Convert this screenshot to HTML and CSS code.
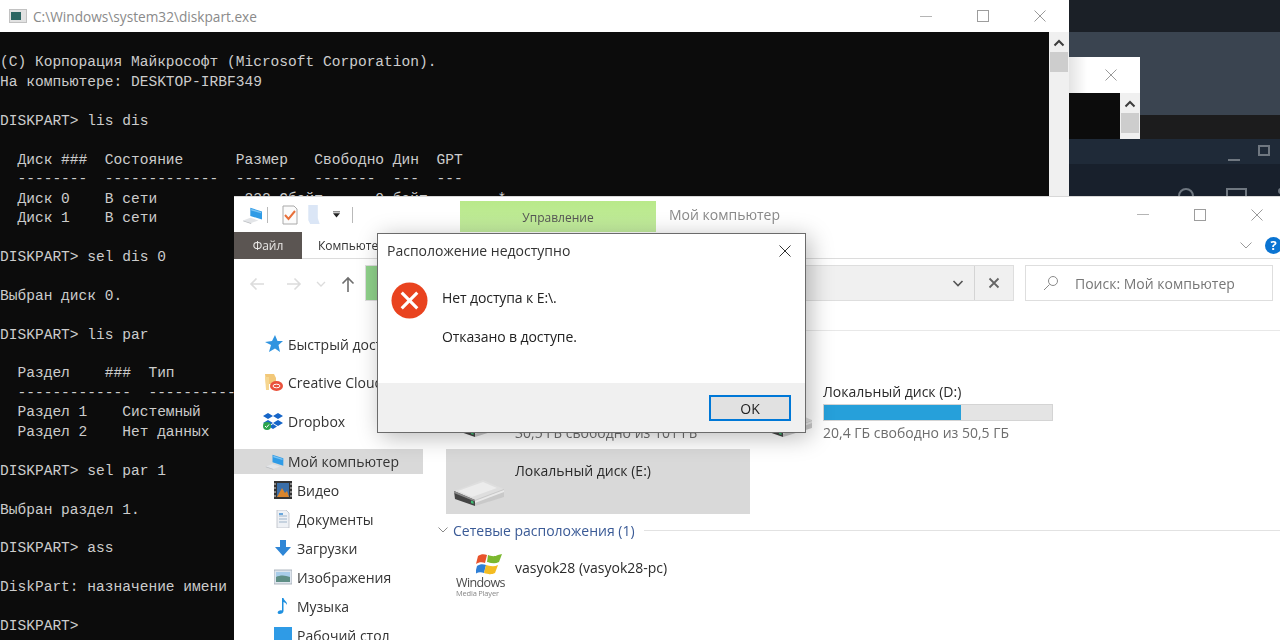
FILE: index.html
```html
<!DOCTYPE html>
<html lang="ru">
<head>
<meta charset="utf-8">
<title>diskpart</title>
<link rel="stylesheet" href="styles.css">
</head>
<body>
<svg class="defs" aria-hidden="true">
  <symbol id="pc" viewBox="0 0 24 20">
    <path d="M9 2 22 6v9L9 11z" fill="#2f9be6"/>
    <path d="M10 3.200 21 6.600v1.500L10 5z" fill="#7cc4f3"/>
    <path d="M1 16l8-3 9 3-8 3z" fill="#e3e5e8"/>
    <path d="M1 16l9 3v1l-9-3z" fill="#b9bcc0"/>
  </symbol>
  <symbol id="drive" viewBox="0 0 50 26">
    <path d="M0 11 29 0l21 9-29 11z" fill="#dedede"/>
    <path d="M4 11 29 2l14 6-25 9z" fill="#ececec"/>
    <path d="M21 20 50 9v8L21 26z" fill="#c9c9c9"/>
    <path d="M21 21 50 10v2L21 23z" fill="#e9e9e9"/>
    <path d="M0 11l21 9v6L1 19z" fill="#444"/>
    <path d="M0 11l21 9v1.500L0 13z" fill="#8c8c8c"/>
    <path d="M17 20.500l2.500 1v2.500l-2.500-1z" fill="#3fbf74"/>
  </symbol>
  <symbol id="x" viewBox="0 0 12 12">
    <path d="M.5.5l11 11M11.500.5l-11 11" fill="none" stroke="currentColor" stroke-width="1"/>
  </symbol>
  <symbol id="up" viewBox="0 0 12 8">
    <path d="M1.500 6.500 6 2l4.500 4.500" fill="none" stroke="currentColor" stroke-width="2"/>
  </symbol>
</svg>

<div class="desktop">
  <div class="backapp">
    <div class="ba-top"></div>
    <div class="ba-slate"></div>
    <div class="ba-black"></div>
    <div class="ba-bar">
      <span class="ba-min"></span>
      <span class="ba-max"></span>
    </div>
    <div class="ba-tools">
      <span class="ba-circle"></span>
      <span class="ba-rect"></span>
      <span class="ba-dot"></span>
    </div>
  </div>

  <div class="minicmd">
    <div class="mini-title"><svg class="x-icon"><use href="#x"/></svg></div>
    <div class="mini-body">
      <div class="scrollbar">
        <svg class="sb-arrow"><use href="#up"/></svg>
        <span class="sb-thumb"></span>
      </div>
    </div>
  </div>

  <section class="cmd">
    <header class="cmd-title">
      <span class="cmd-icon"><span class="cmd-icon-in"></span></span>
      <span class="cmd-path">C:\Windows\system32\diskpart.exe</span>
      <span class="winbtns cmd-btns">
        <span class="wb"><span class="min"></span></span>
        <span class="wb"><span class="max"></span></span>
        <span class="wb"><svg class="x-icon"><use href="#x"/></svg></span>
      </span>
    </header>
    <div class="cmd-body">
<pre class="console">

(C) Корпорация Майкрософт (Microsoft Corporation).
На компьютере: DESKTOP-IRBF349

DISKPART&gt; lis dis

  Диск ###  Состояние      Размер   Свободно Дин  GPT
  --------  -------------  -------  -------  ---  ---
  Диск 0    В сети          232 Gбайт      0 байт        *
  Диск 1    В сети          931 Gбайт      0 байт

DISKPART&gt; sel dis 0

Выбран диск 0.

DISKPART&gt; lis par

  Раздел    ###  Тип              Размер   Смещение
  -------------  ----------------  -------  -------
  Раздел 1    Системный          100 Mб  1024 Kб
  Раздел 2    Нет данных          16 Mб   101 Mб

DISKPART&gt; sel par 1

Выбран раздел 1.

DISKPART&gt; ass

DiskPart: назначение имени диска выполнено успешно.

DISKPART&gt;
</pre>
      <div class="scrollbar">
        <svg class="sb-arrow"><use href="#up"/></svg>
        <span class="sb-thumb"></span>
      </div>
    </div>
  </section>

  <section class="explorer">
    <header class="ex-title">
      <svg class="qa-pc"><use href="#pc"/></svg>
      <span class="qa-sep"></span>
      <svg class="qa-note" viewBox="0 0 16 20">
        <path d="M1 1h11l3 3v15H1z" fill="#fbfbfb" stroke="#a9a9a9"/>
        <path d="M3 10l3.500 4L13 6" fill="none" stroke="#e8703a" stroke-width="2"/>
      </svg>
      <svg class="qa-folder" viewBox="0 0 12 20"><path d="M0 0h10v14l2 6H2l-2-4z" fill="#dbe6f6"/></svg>
      <svg class="qa-drop" viewBox="0 0 8 7"><path d="M0 0h8v1H0zM0 2h8L4 7z" fill="#222"/></svg>
      <span class="qa-sep qa-sep2"></span>
      <span class="manage"><span class="manage-label">Управление</span></span>
      <span class="ex-name">Мой компьютер</span>
      <span class="winbtns ex-btns">
        <span class="wb"><span class="min"></span></span>
        <span class="wb"><span class="max"></span></span>
        <span class="wb"><svg class="x-icon"><use href="#x"/></svg></span>
      </span>
    </header>

    <nav class="ribbon">
      <span class="tab-file">Файл</span>
      <span class="tab">Компьютер</span>
      <svg class="rb-chev" viewBox="0 0 12 7"><path d="M.5.5 6 6 11.500.5" fill="none" stroke="#9a9a9a"/></svg>
      <span class="help">?</span>
    </nav>

    <div class="navbar">
      <svg class="nav-a back" viewBox="0 0 16 14"><path d="M15 7H2M7.500 1.500 2 7l5.500 5.500" fill="none" stroke="#dcdcdc" stroke-width="1.600"/></svg>
      <svg class="nav-a fwd" viewBox="0 0 16 14"><path d="M1 7h13M8.500 1.500 14 7l-5.500 5.500" fill="none" stroke="#dcdcdc" stroke-width="1.600"/></svg>
      <svg class="nav-c" viewBox="0 0 10 6"><path d="M1 1l4 4 4-4" fill="none" stroke="#dcdcdc" stroke-width="1.300"/></svg>
      <svg class="nav-u" viewBox="0 0 14 16"><path d="M7 16V2M1.500 7.500 7 2l5.500 5.500" fill="none" stroke="#6e6e6e" stroke-width="1.600"/></svg>
      <div class="address">
        <span class="addr-icon"></span>
        <span class="addr-fill"></span>
        <svg class="addr-chev" viewBox="0 0 12 7"><path d="M1.500 1 6 5.500 10.500 1" fill="none" stroke="#555" stroke-width="1.600"/></svg>
        <span class="addr-x"><svg class="addr-x-i" viewBox="0 0 12 12"><path d="M1.500 1.500l9 9M10.500 1.500l-9 9" stroke="#666" stroke-width="1.800"/></svg></span>
      </div>
      <div class="search">
        <svg class="search-i" viewBox="0 0 16 16"><circle cx="10" cy="6" r="4.500" fill="none" stroke="#8a8a8a"/><path d="M6.500 9.500 1 15" stroke="#8a8a8a"/></svg>
        <span class="search-t">Поиск: Мой компьютер</span>
      </div>
    </div>

    <div class="ex-body">
      <aside class="sidebar">
        <div class="side-top">
          <svg class="si" viewBox="0 0 18 18"><path d="M10 0l2.500 6H18l-4.500 4 1.500 7-5-3.500L4 17l2-7-6-3 7-1z" fill="#2f94e0"/></svg>
          <span>Быстрый доступ</span>
        </div>
        <div class="side-top">
          <svg class="si" viewBox="0 0 18 18"><path d="M0 0h9l2 4v6H1z" fill="#f2c879"/><path d="M0 3h4v13H1z" fill="#f6d690"/><ellipse cx="11.500" cy="12" rx="6.500" ry="5" fill="#e9513b"/><ellipse cx="11.500" cy="12" rx="3.500" ry="1.800" fill="none" stroke="#fff"/></svg>
          <span>Creative Cloud Files</span>
        </div>
        <div class="side-top">
          <svg class="si si-wide" viewBox="0 0 20 18"><path d="M5 1l5 3-5 3-5-3zM15 1l5 3-5 3-5-3zM5 8l5 3-5 3-5-3zM15 8l5 3-5 3-5-3zM10 12l4 2.500-4 2.500-4-2.500z" fill="#1565c8"/><circle cx="4" cy="14" r="4" fill="#2da44e"/><path d="M2 14l1.500 1.500L6 12.500" fill="none" stroke="#fff"/></svg>
          <span>Dropbox</span>
        </div>
        <div class="side-sel">
          <svg class="si"><use href="#pc"/></svg>
          <span>Мой компьютер</span>
        </div>
        <div class="side-child">
          <svg class="si" viewBox="0 0 18 18"><rect width="18" height="18" fill="#333"/><rect x="3" y="2" width="12" height="14" fill="#3a6ea8"/><path d="M3 16l5-9 3 5 2-2 2 6z" fill="#d9852c"/><path d="M1 2v14M17 2v14" stroke="#ddd" stroke-dasharray="2 2"/></svg>
          <span>Видео</span>
        </div>
        <div class="side-child">
          <svg class="si" viewBox="0 0 18 18"><path d="M3 0h9l3 3v15H3z" fill="#eef1f5" stroke="#b9bec5" stroke-width=".8"/><path d="M5 6h8M5 9h8M5 12h8" stroke="#9db3c9"/><rect x="5" y="3" width="4" height="2" fill="#6aa7dc"/></svg>
          <span>Документы</span>
        </div>
        <div class="side-child">
          <svg class="si" viewBox="0 0 18 18"><path d="M6 1h6v7h5l-8 9-8-9h5z" fill="#2f86d6"/></svg>
          <span>Загрузки</span>
        </div>
        <div class="side-child">
          <svg class="si" viewBox="0 0 18 18"><rect y="2" width="18" height="14" fill="#dfe6ee" stroke="#9fa8b2" stroke-width=".8"/><rect x="2" y="4" width="14" height="5" fill="#a9cde9"/><path d="M2 9c4-2 9-2 14 0v5H2z" fill="#5f8f86"/></svg>
          <span>Изображения</span>
        </div>
        <div class="side-child">
          <svg class="si" viewBox="0 0 18 18"><path d="M8 1h1.500c.5 3 4 3.500 3.500 7-1-2-2-2.500-3.500-3v9c0 2-2 3-4 3s-2.500-2-1-3 2.500-1 3.500-.5z" fill="#1e90e0"/></svg>
          <span>Музыка</span>
        </div>
        <div class="side-child">
          <svg class="si" viewBox="0 0 18 18"><rect y="1" width="18" height="14" fill="#2f9be6"/></svg>
          <span>Рабочий стол</span>
        </div>
      </aside>

      <main class="content">
        <div class="rule"></div>
        <div class="tiles">
          <div class="tile">
            <svg class="drive"><use href="#drive"/></svg>
            <div class="tile-text meter-text">
              <div class="label">Локальный диск (C:)</div>
              <div class="bar"><span class="bar-fill bar-c"></span></div>
              <div class="free">30,5 ГБ свободно из 101 ГБ</div>
            </div>
          </div>
          <div class="tile">
            <svg class="drive"><use href="#drive"/></svg>
            <div class="tile-text meter-text">
              <div class="label">Локальный диск (D:)</div>
              <div class="bar"><span class="bar-fill bar-d"></span></div>
              <div class="free">20,4 ГБ свободно из 50,5 ГБ</div>
            </div>
          </div>
          <div class="tile selected">
            <svg class="drive"><use href="#drive"/></svg>
            <div class="tile-text">
              <div class="label">Локальный диск (E:)</div>
            </div>
          </div>
        </div>
        <div class="group">
          <svg class="group-chev" viewBox="0 0 10 6"><path d="M.5.5 5 5 9.500.5" fill="none" stroke="#8a8a8a"/></svg>
          <span class="group-name">Сетевые расположения (1)</span>
          <span class="group-line"></span>
        </div>
        <div class="net">
          <div class="wmp">
            <svg class="flag" viewBox="0 0 26 24">
              <path d="M2 5c3-2 6-2 9-1l-2 8c-3-1-6-1-9 1z" fill="#e8532b"/>
              <path d="M12 4c3 1 6 2 10 0l4-1-3 8c-4 2-8 1-12 0z" fill="#7cb82f"/>
              <path d="M0 14c3-2 6-2 9-1l-2 8c-3-1-6-1-9 1z" fill="#2f7fd6" transform="translate(1 1)"/>
              <path d="M10 14c4 1 8 2 12 0l-3 8c-4 2-7 1-11 0z" fill="#f4bc22"/>
            </svg>
            <span class="wmp-1">Windows</span>
            <span class="wmp-2">Media Player</span>
          </div>
          <div class="label net-label">vasyok28 (vasyok28-pc)</div>
        </div>
      </main>
    </div>
  </section>

  <section class="dialog">
    <header class="dlg-title">
      <span>Расположение недоступно</span>
      <svg class="dlg-x"><use href="#x"/></svg>
    </header>
    <div class="dlg-body">
      <svg class="err" viewBox="0 0 38 38">
        <circle cx="19" cy="19" r="18.500" fill="#e9431f"/>
        <path d="M11 11l16 16M27 11 11 27" stroke="#fff" stroke-width="3.200"/>
      </svg>
      <div class="dlg-text">
        <p class="msg">Нет доступа к E:\.</p>
        <p class="msg">Отказано в доступе.</p>
      </div>
    </div>
    <footer class="dlg-foot"><button class="ok">OK</button></footer>
  </section>
</div>
</body>
</html>
```
FILE: styles.css
```css
* { box-sizing: border-box; }
html, body { margin: 0; padding: 0; background: #18202c; }
body { width: 1280px; height: 640px; overflow: hidden; font-family: "Open Sans", "Noto Sans", sans-serif; }
.defs { display: none; }
.desktop { position: relative; width: 1280px; height: 640px; overflow: hidden; filter: blur(.4px); }

/* background app */
.backapp { position: absolute; left: 1069px; top: 0; width: 211px; height: 196px; display: flex; flex-direction: column; }
.ba-top { height: 32px; background: #1b2027; }
.ba-slate { height: 83px; background: #3a4450; }
.ba-black { height: 24px; background: #1c1c1d; }
.ba-bar { height: 25px; background: #1f2a38; display: flex; align-items: center; justify-content: flex-end; gap: 18px; padding-right: 10px; }
.ba-min { width: 12px; height: 2px; background: #6f7780; margin-top: 8px; margin-bottom: -8px; }
.ba-max { width: 12px; height: 11px; border: 2px solid #6f7780; margin-bottom: 2px; }
.ba-tools { flex: 1; background: #18202c; display: flex; justify-content: flex-end; padding-top: 24px; align-items: flex-start; overflow: hidden; }
.ba-circle { width: 16px; height: 16px; border: 2px solid #6f7780; border-radius: 50%; }
.ba-rect { width: 21px; height: 18px; border: 2px solid #6f7780; margin-left: 32px; }
.ba-dot { width: 6px; height: 6px; background: #6f7780; border-radius: 50%; margin: 0 -4px 0 31px; }

/* small cmd behind */
.minicmd { position: absolute; left: 1069px; top: 57px; width: 71px; height: 82px; display: flex; flex-direction: column; }
.mini-title { height: 36px; background: linear-gradient(90deg, #e4e4e4, #fff 18px); color: #9a9a9a; display: flex; align-items: center; justify-content: flex-end; padding-right: 23px; }
.mini-body { flex: 1; background: #0c0c0c; display: flex; justify-content: flex-end; }
.mini-body .scrollbar { width: 20px; height: 46px; }

/* console window */
.cmd { position: absolute; left: 0; top: 0; width: 1069px; height: 640px; display: flex; flex-direction: column; background: #fff; }
.cmd-title { height: 32px; flex: none; display: flex; align-items: center; background: #fff; padding-left: 9px; position: relative; }
.cmd-icon { width: 18px; height: 14px; background: #e2e2e2; border: 1px solid #c2c2c2; display: flex; padding: 2px 5px 2px 1px; }
.cmd-icon-in { flex: 1; background: #2c6662; }
.cmd-path { margin-left: 6px; font-size: 13.670px; color: #8a8a8a; }
.winbtns { display: flex; margin-left: auto; }
.wb { width: 57px; display: flex; align-items: center; justify-content: center; color: #8f8f8f; }
.min { width: 12px; height: 1px; background: #b5b5b5; }
.max { width: 12px; height: 12px; border: 1px solid #9d9d9d; }
.x-icon { width: 12px; height: 12px; color: #9a9a9a; display: block; }
.cmd-btns { padding-right: 1px; }

.cmd-body { flex: 1; min-height: 0; display: flex; background: #0c0c0c; }
.console { flex: 1; margin: 0; padding-top: 2px; font-family: "Liberation Mono", "DejaVu Sans Mono", monospace; font-size: 14.560px; line-height: 19.440px; color: #cccccc; overflow: hidden; }
.scrollbar { width: 20px; height: 100%; background: #f0f0f0; display: flex; flex-direction: column; align-items: center; flex: none; color: #3d3d3d; padding-top: 7px; }
.sb-arrow { width: 12px; height: 8px; display: block; }
.sb-thumb { width: 18px; height: 20px; background: #cdcdcd; margin-top: 5px; }

/* explorer */
.explorer { position: absolute; left: 234px; top: 196px; width: 1046px; height: 444px; background: #fff; display: flex; flex-direction: column; border-top: 1px solid #d8d8d8; color: #1f1f1f; }
.ex-title { height: 35px; flex: none; display: flex; align-items: center; padding-left: 8px; }
.qa-pc { width: 22px; height: 18px; }
.qa-sep { width: 1px; height: 16px; background: #b9b9b9; margin-left: 3px; }
.qa-note { width: 16px; height: 20px; margin-left: 14px; }
.qa-folder { width: 12px; height: 19px; margin-left: 10px; }
.qa-drop { width: 7px; height: 7px; margin-left: 13px; }
.qa-sep2 { margin-left: 12px; }
.manage { width: 196px; align-self: stretch; margin: 4px 0 0 107px; background: linear-gradient(#b9e98a, #c3ec9f); display: flex; align-items: center; justify-content: center; }
.manage-label { font-size: 12px; color: #555; margin-top: 1px; }
.ex-name { margin-left: 13px; font-size: 14px; color: #8a8a8a; }
.ex-btns { margin-right: -5px; }

.ribbon { height: 27px; flex: none; display: flex; align-items: center; border-bottom: 1px solid #dcdcdc; position: relative; }
.tab-file { width: 68px; height: 27px; background: #5b5552; color: #e9e7e5; font-size: 12px; display: flex; align-items: center; justify-content: center; }
.tab { margin-left: 16px; font-size: 12px; color: #333; }
.rb-chev { width: 12px; height: 7px; margin-left: auto; }
.help { width: 17px; height: 17px; border-radius: 50%; background: #0a74d2; color: #fff; font-size: 13px; font-weight: 700; display: flex; align-items: center; justify-content: center; margin: 0 -2px 0 13px; }

.navbar { height: 51px; flex: none; display: flex; align-items: flex-start; padding-top: 6px; }
.nav-a { width: 16px; height: 14px; margin-top: 12px; }
.back { margin-left: 15px; }
.fwd { margin-left: 21px; }
.nav-c { width: 10px; height: 6px; margin: 16px 0 0 14px; }
.nav-u { width: 14px; height: 16px; margin: 11px 0 0 15px; }
.address { width: 649px; height: 36px; margin-left: 10px; background: #f0f0f0; border: 1px solid #dedede; display: flex; align-items: center; }
.addr-icon { width: 12px; align-self: stretch; background: #8fd18a; }
.addr-fill { flex: 1; }
.addr-chev { width: 12px; height: 7px; margin-right: 10px; }
.addr-x { width: 39px; align-self: stretch; border-left: 1px solid #d4d4d4; display: flex; align-items: center; justify-content: center; }
.addr-x-i { width: 12px; height: 12px; }
.search { width: 248px; height: 36px; margin-left: 11px; border: 1px solid #dedede; display: flex; align-items: center; padding-left: 17px; }
.search-i { width: 16px; height: 16px; }
.search-t { margin-left: 16px; font-size: 14px; color: #777; white-space: nowrap; }

.ex-body { flex: 1; min-height: 0; display: flex; overflow: hidden; }
.sidebar { width: 190px; flex: none; padding-top: 15px; font-size: 14px; color: #333; white-space: nowrap; overflow: hidden; }
.si { width: 18px; height: 18px; flex: none; }
.si-wide { width: 20px; margin-left: -2px; }
.side-top { height: 38.500px; display: flex; align-items: center; gap: 5px; padding-left: 31px; }
.side-sel { height: 25px; margin-top: 8.500px; width: 189px; background: #d9d9d9; display: flex; align-items: center; gap: 3px; padding-left: 31px; }
.side-sel .si { width: 20px; height: 17px; }
.side-child { height: 29px; display: flex; align-items: center; gap: 5px; padding-left: 40px; color: #333; }
.side-sel + .side-child { margin-top: 1.500px; }

.content { flex: 1; min-width: 0; padding-top: 20px; }
.rule { height: 1px; margin-left: 30px; background: #e8e8e8; }
.tiles { display: grid; grid-template-columns: 304px 304px; gap: 4px; margin: 49px 0 0 22px; }
.tile { height: 65px; display: flex; padding-left: 8px; gap: 11px; }
.tile.selected { background: #d9d9d9; }
.drive { width: 50px; height: 26px; margin-top: 31px; flex: none; }
.tile-text { padding-top: 12px; flex: 1; min-width: 0; }
.meter-text { padding-top: 2px; }
.label { font-size: 14px; line-height: 20px; color: #2a2a2a; white-space: nowrap; }
.bar { width: 230px; height: 17px; margin-top: 2px; background: #e4e4e4; border: 1px solid #d4d4d4; display: flex; }
.bar-fill { display: block; background: #26a0da; }
.bar-d { width: 137px; }
.bar-c { width: 158px; }
.free { font-size: 14px; line-height: 20px; margin-top: 2px; color: #6d6d6d; white-space: nowrap; }

.group { display: flex; align-items: center; height: 20px; margin: 6px 0 0 14px; }
.group-chev { width: 10px; height: 6px; }
.group-name { margin-left: 5px; font-size: 14px; color: #3a5a96; white-space: nowrap; }
.group-line { flex: 1; height: 1px; margin-left: 9px; background: #e2e2e2; }
.net { display: flex; margin: 6px 0 0 30px; gap: 11px; }
.wmp { width: 50px; height: 56px; display: flex; flex-direction: column; align-items: flex-start; padding: 5px 0 0 2px; }
.flag { width: 26px; height: 24px; margin-left: 20px; }
.wmp-1 { font-size: 12.500px; line-height: 12px; margin-top: 2px; color: #4a4a4a; letter-spacing: -.6px; }
.wmp-2 { font-size: 7.500px; line-height: 9px; color: #888; letter-spacing: -.2px; white-space: nowrap; }
.net-label { padding-top: 12px; }

/* dialog */
.dialog { position: absolute; left: 377px; top: 233px; width: 429px; height: 200px; background: #fff; border: 1px solid #6b6b6b; display: flex; flex-direction: column; box-shadow: 4px 4px 22px rgba(0,0,0,.28); }
.dlg-title { height: 33px; flex: none; display: flex; align-items: center; justify-content: space-between; padding: 0 14px 0 9px; font-size: 14px; color: #333; }
.dlg-x { width: 12px; height: 12px; color: #333; }
.dlg-body { flex: 1; display: flex; padding: 15px 0 0 13px; gap: 14px; }
.err { width: 37px; height: 37px; flex: none; }
.dlg-text { padding-top: 6px; }
.msg { margin: 0 0 19px; font-size: 14px; line-height: 20px; color: #222; letter-spacing: -.1px; }
.dlg-foot { height: 49px; flex: none; background: #f0f0f0; display: flex; justify-content: flex-end; align-items: flex-start; padding: 12px 14px 0 0; }
.ok { width: 82px; height: 26px; background: #e1e1e1; border: 2px solid #0078d7; font: inherit; font-size: 14px; color: #222; padding: 0; }
```
